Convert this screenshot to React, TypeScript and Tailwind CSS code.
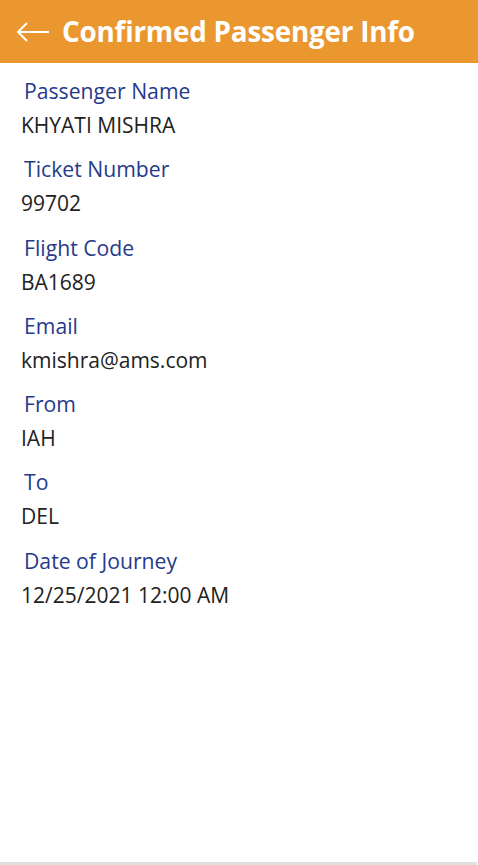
const fields = [
	{ label: "Passenger Name", value: "KHYATI MISHRA" },
	{ label: "Ticket Number", value: "99702" },
	{ label: "Flight Code", value: "BA1689" },
	{ label: "Email", value: "kmishra@ams.com" },
	{ label: "From", value: "IAH" },
	{ label: "To", value: "DEL" },
	{ label: "Date of Journey", value: "12/25/2021 12:00 AM" },
];

export default function App() {
	return (
		<div className="flex h-[865px] w-[478px] flex-col bg-white font-['Open_Sans',sans-serif]">
			<header className="flex h-[63px] shrink-0 items-center bg-[#eb9730] pl-[16px] text-white">
				<svg width="34" height="20" viewBox="0 0 34 20" fill="none" stroke="currentColor" strokeWidth="2">
					<path d="M33 10H2M11 1L2 10l9 9" />
				</svg>
				<h1 className="ml-[12px] text-[27.8px] font-bold leading-none tracking-[-0.2px]">Confirmed Passenger Info</h1>
			</header>
			<main className="flex flex-1 flex-col pt-[14px]">
				{fields.map((f) => (
					<div key={f.label} className="flex h-[78.3px] flex-col">
						<div className="pl-[24px] text-[21.2px] leading-[28px] text-[#263a8c]">{f.label}</div>
						<div className="pl-[21px] text-[21px] leading-[40px] text-[#222222]">{f.value}</div>
					</div>
				))}
			</main>
			<div className="h-[3px] w-[477px] shrink-0 bg-[#e0e0e0]" />
		</div>
	);
}
